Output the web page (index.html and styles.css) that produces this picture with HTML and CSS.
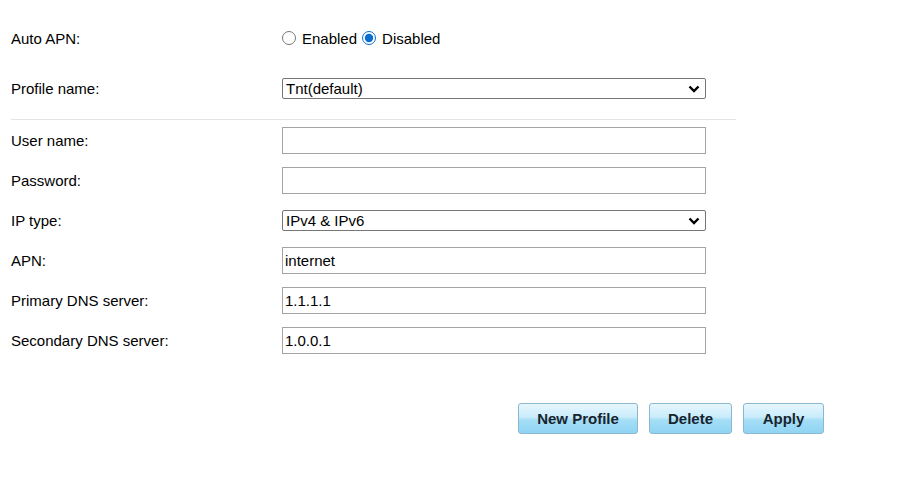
FILE: index.html
```html
<!DOCTYPE html>
<html lang="en">
<head>
    <meta charset="UTF-8">
    <title>APN Settings</title>
    <link rel="stylesheet" href="styles.css">
</head>
<body>
    <div class="apn-form">
        <div class="section">
            <div class="row">
                <label class="row-label">Auto APN:</label>
                <div class="row-field radios">
                    <label class="radio"><input type="radio" name="auto_apn" value="1">Enabled</label>
                    <label class="radio"><input type="radio" name="auto_apn" value="0" checked>Disabled</label>
                </div>
            </div>
            <div class="row">
                <label class="row-label">Profile name:</label>
                <div class="row-field select-wrap">
                    <select class="field select">
                        <option>Tnt(default)</option>
                    </select>
                    <svg class="chevron" width="12" height="8" viewBox="0 0 12 8"><path d="M1.5 1.5 L6 6 L10.5 1.5" fill="none" stroke="#000" stroke-width="2.4"/></svg>
                </div>
            </div>
        </div>

        <div class="divider"></div>

        <div class="section">
            <div class="row">
                <label class="row-label">User name:</label>
                <div class="row-field"><input class="field text" type="text"></div>
            </div>
            <div class="row">
                <label class="row-label">Password:</label>
                <div class="row-field"><input class="field text" type="password"></div>
            </div>
            <div class="row">
                <label class="row-label">IP type:</label>
                <div class="row-field select-wrap">
                    <select class="field select">
                        <option>IPv4 &amp; IPv6</option>
                        <option>IPv4</option>
                        <option>IPv6</option>
                    </select>
                    <svg class="chevron" width="12" height="8" viewBox="0 0 12 8"><path d="M1.5 1.5 L6 6 L10.5 1.5" fill="none" stroke="#000" stroke-width="2.4"/></svg>
                </div>
            </div>
            <div class="row">
                <label class="row-label">APN:</label>
                <div class="row-field"><input class="field text" type="text" value="internet"></div>
            </div>
            <div class="row">
                <label class="row-label">Primary DNS server:</label>
                <div class="row-field"><input class="field text" type="text" value="1.1.1.1"></div>
            </div>
            <div class="row">
                <label class="row-label">Secondary DNS server:</label>
                <div class="row-field"><input class="field text" type="text" value="1.0.0.1"></div>
            </div>
        </div>

        <div class="buttons">
            <button class="btn btn-new">New Profile</button>
            <button class="btn btn-delete">Delete</button>
            <button class="btn btn-apply">Apply</button>
        </div>
    </div>
</body>
</html>
```

FILE: styles.css
```css
* {
    box-sizing: border-box;
}

body {
    margin: 0;
    background: #fff;
    font-family: Arial, 'Liberation Sans', sans-serif;
    font-size: 15px;
    color: #000;
}

.apn-form {
    padding: 18px 0 0 11px;
    width: 824px;
}

.row {
    display: flex;
    align-items: center;
    height: 40px;
}

.section:first-child .row + .row {
    margin-top: 10px;
}

.row-label {
    width: 271px;
    flex: none;
}

.row-field {
    width: 424px;
}

.radios {
    display: flex;
    align-items: center;
}

.radio {
    display: flex;
    align-items: center;
    margin-right: 5px;
}

.radio input {
    width: 14px;
    height: 14px;
    margin: 0 6px 1px 0;
    accent-color: #0a6ed1;
}

.divider {
    width: 725px;
    height: 1px;
    margin-top: 11px;
    background: #e3e3e3;
}

.field {
    font-family: Arial, 'Liberation Sans', sans-serif;
    font-size: 15px;
    color: #000;
    width: 424px;
}

.text {
    height: 27px;
    padding: 0 2px 0 2px;
    border: 1px solid #a4a4a4;
    outline: none;
}

.select-wrap {
    position: relative;
}

.select {
    display: block;
    height: 21px;
    padding: 0 24px 0 3px;
    border: 1px solid #767676;
    border-radius: 2px;
    background: #fff;
    appearance: none;
    -webkit-appearance: none;
    line-height: 19px;
}

.chevron {
    position: absolute;
    right: 6px;
    top: 7px;
    pointer-events: none;
}

.buttons {
    display: flex;
    justify-content: flex-end;
    gap: 11px;
    margin-top: 43px;
}

.btn {
    height: 31px;
    border: 1px solid #8cb8cf;
    border-radius: 3px;
    background: linear-gradient(to bottom, #e6f6fd 0%, #c9ecfb 45%, #a5def6 55%, #8fd4f3 100%);
    font-family: Arial, 'Liberation Sans', sans-serif;
    font-size: 15px;
    font-weight: bold;
    color: #17242e;
    cursor: pointer;
    padding: 0;
}

.btn-new {
    width: 120px;
}

.btn-delete {
    width: 83px;
}

.btn-apply {
    width: 81px;
}
```
